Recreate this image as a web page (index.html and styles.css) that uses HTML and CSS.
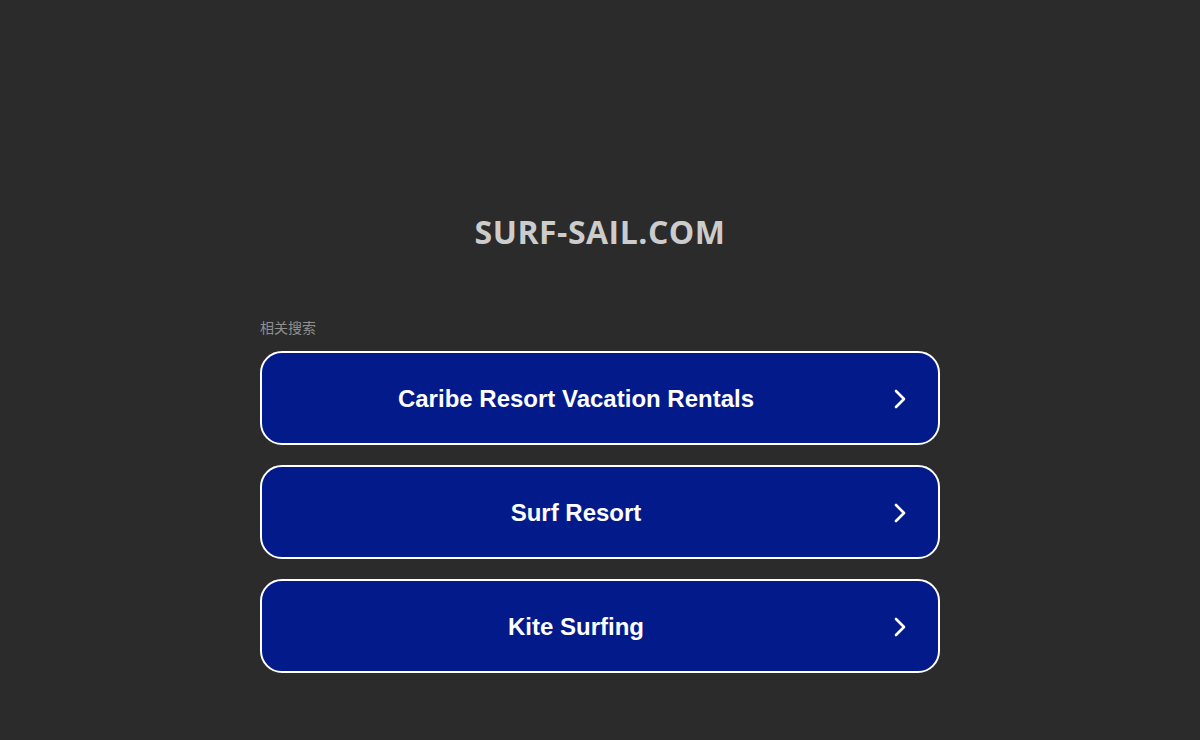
FILE: index.html
```html
<!DOCTYPE html>
<html>
<head>
<meta charset="utf-8">
<link rel="stylesheet" href="styles.css">
</head>
<body>
<div class="page">
  <h1 class="title">SURF-SAIL.COM</h1>
  <div class="related">
    <div class="label">相关搜索</div>
    <a class="item" href="#"><span class="text">Caribe Resort Vacation Rentals</span><svg class="arrow" viewBox="0 0 20 20" width="20" height="20"><path d="M6 2 L14 10 L6 18" fill="none" stroke="#fff" stroke-width="2.6" stroke-linecap="round" stroke-linejoin="round"/></svg></a>
    <a class="item" href="#"><span class="text">Surf Resort</span><svg class="arrow" viewBox="0 0 20 20" width="20" height="20"><path d="M6 2 L14 10 L6 18" fill="none" stroke="#fff" stroke-width="2.6" stroke-linecap="round" stroke-linejoin="round"/></svg></a>
    <a class="item" href="#"><span class="text">Kite Surfing</span><svg class="arrow" viewBox="0 0 20 20" width="20" height="20"><path d="M6 2 L14 10 L6 18" fill="none" stroke="#fff" stroke-width="2.6" stroke-linecap="round" stroke-linejoin="round"/></svg></a>
  </div>
</div>
</body>
</html>
```
FILE: styles.css
```css
html, body {
  margin: 0;
  padding: 0;
  background: #2b2b2b;
}
.page {
  width: 1200px;
  height: 740px;
  display: flex;
  flex-direction: column;
  align-items: center;
}
.title {
  margin: 211px 0 0 0;
  font-family: "Open Sans", "DejaVu Sans", sans-serif;
  font-weight: 700;
  font-size: 32px;
  line-height: 42px;
  letter-spacing: 0.5px;
  color: #cccccc;
}
.related {
  width: 680px;
  margin-top: 65px;
  display: flex;
  flex-direction: column;
}
.label {
  font-family: "Noto Sans CJK SC", "Liberation Sans", sans-serif;
  font-size: 14px;
  line-height: 18px;
  color: #8f8f8f;
  margin-bottom: 15px;
}
.item {
  box-sizing: border-box;
  height: 94px;
  border: 2px solid #ffffff;
  border-radius: 22px;
  background: #021a8a;
  display: flex;
  align-items: center;
  padding: 2px 28px 0 0;
  margin-bottom: 20px;
  text-decoration: none;
}
.text {
  flex: 1;
  text-align: center;
  font-family: "Liberation Sans", Arial, sans-serif;
  font-weight: 700;
  font-size: 24px;
  color: #ffffff;
}
.arrow {
  flex: none;
}
```
